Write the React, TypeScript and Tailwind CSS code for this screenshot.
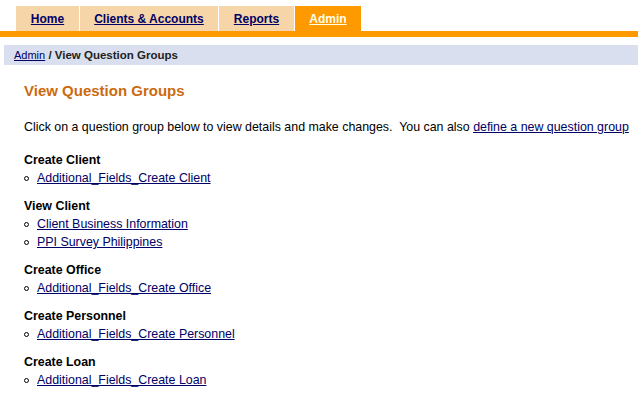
import React from "react";

const tabs = [
  { label: "Home", width: "w-[63px]", active: false },
  { label: "Clients & Accounts", width: "w-[138px]", active: false },
  { label: "Reports", width: "w-[75px]", active: false },
  { label: "Admin", width: "w-[66px]", active: true },
];

const groups = [
  { title: "Create Client", items: ["Additional_Fields_Create Client"] },
  { title: "View Client", items: ["Client Business Information", "PPI Survey Philippines"] },
  { title: "Create Office", items: ["Additional_Fields_Create Office"] },
  { title: "Create Personnel", items: ["Additional_Fields_Create Personnel"] },
  { title: "Create Loan", items: ["Additional_Fields_Create Loan"] },
];

const App = () => {
  return (
    <div className="min-h-[395px] bg-white font-['Liberation_Sans',Arial,sans-serif] text-[12.4px] text-black">
      {/* Top tabs */}
      <div className="flex gap-px pl-[16px] pt-[6px]">
        {tabs.map((tab) => (
          <div
            key={tab.label}
            className={`${tab.width} h-[25px] flex items-center justify-center font-bold text-[12px] ${
              tab.active ? "bg-[#ff9900]" : "bg-[#f6d5a9]"
            }`}
          >
            <a
              href="#"
              className={`underline ${tab.active ? "text-[#ffffe8]" : "text-[#000066]"}`}
            >
              {tab.label}
            </a>
          </div>
        ))}
      </div>
      <div className="h-[6px] bg-[#ff9900] mr-px" />

      {/* Breadcrumb */}
      <div className="mt-[8px] ml-[4px] mr-px h-[20px] bg-[#d9dfee] pl-[10px] text-[11.5px] leading-[20px]">
        <a href="#" className="underline text-[#000066] text-[11px]">Admin</a>
        <span className="font-bold text-[#222]"> / View Question Groups</span>
      </div>

      {/* Content */}
      <div className="pl-[24px] pt-[17px]">
        <h1 className="text-[15px] font-bold text-[#cc6a10] leading-[18px]">View Question Groups</h1>

        <p className="mt-[18px] leading-[18px] whitespace-pre">
          Click on a question group below to view details and make changes.  You can also{" "}
          <a href="#" className="underline text-[#000066]">define a new question group</a>
        </p>

        <div className="mt-[15px] flex flex-col gap-[10px]">
          {groups.map((g) => (
            <div key={g.title}>
              <div className="font-bold leading-[18px]">{g.title}</div>
              <ul>
                {g.items.map((item) => (
                  <li key={item} className="flex items-center leading-[18px]">
                    <span className="w-[5px] h-[5px] rounded-full border border-black mr-[8px]" />
                    <a href="#" className="underline text-[#000066]">{item}</a>
                  </li>
                ))}
              </ul>
            </div>
          ))}
        </div>
      </div>
    </div>
  );
};

export default App;
